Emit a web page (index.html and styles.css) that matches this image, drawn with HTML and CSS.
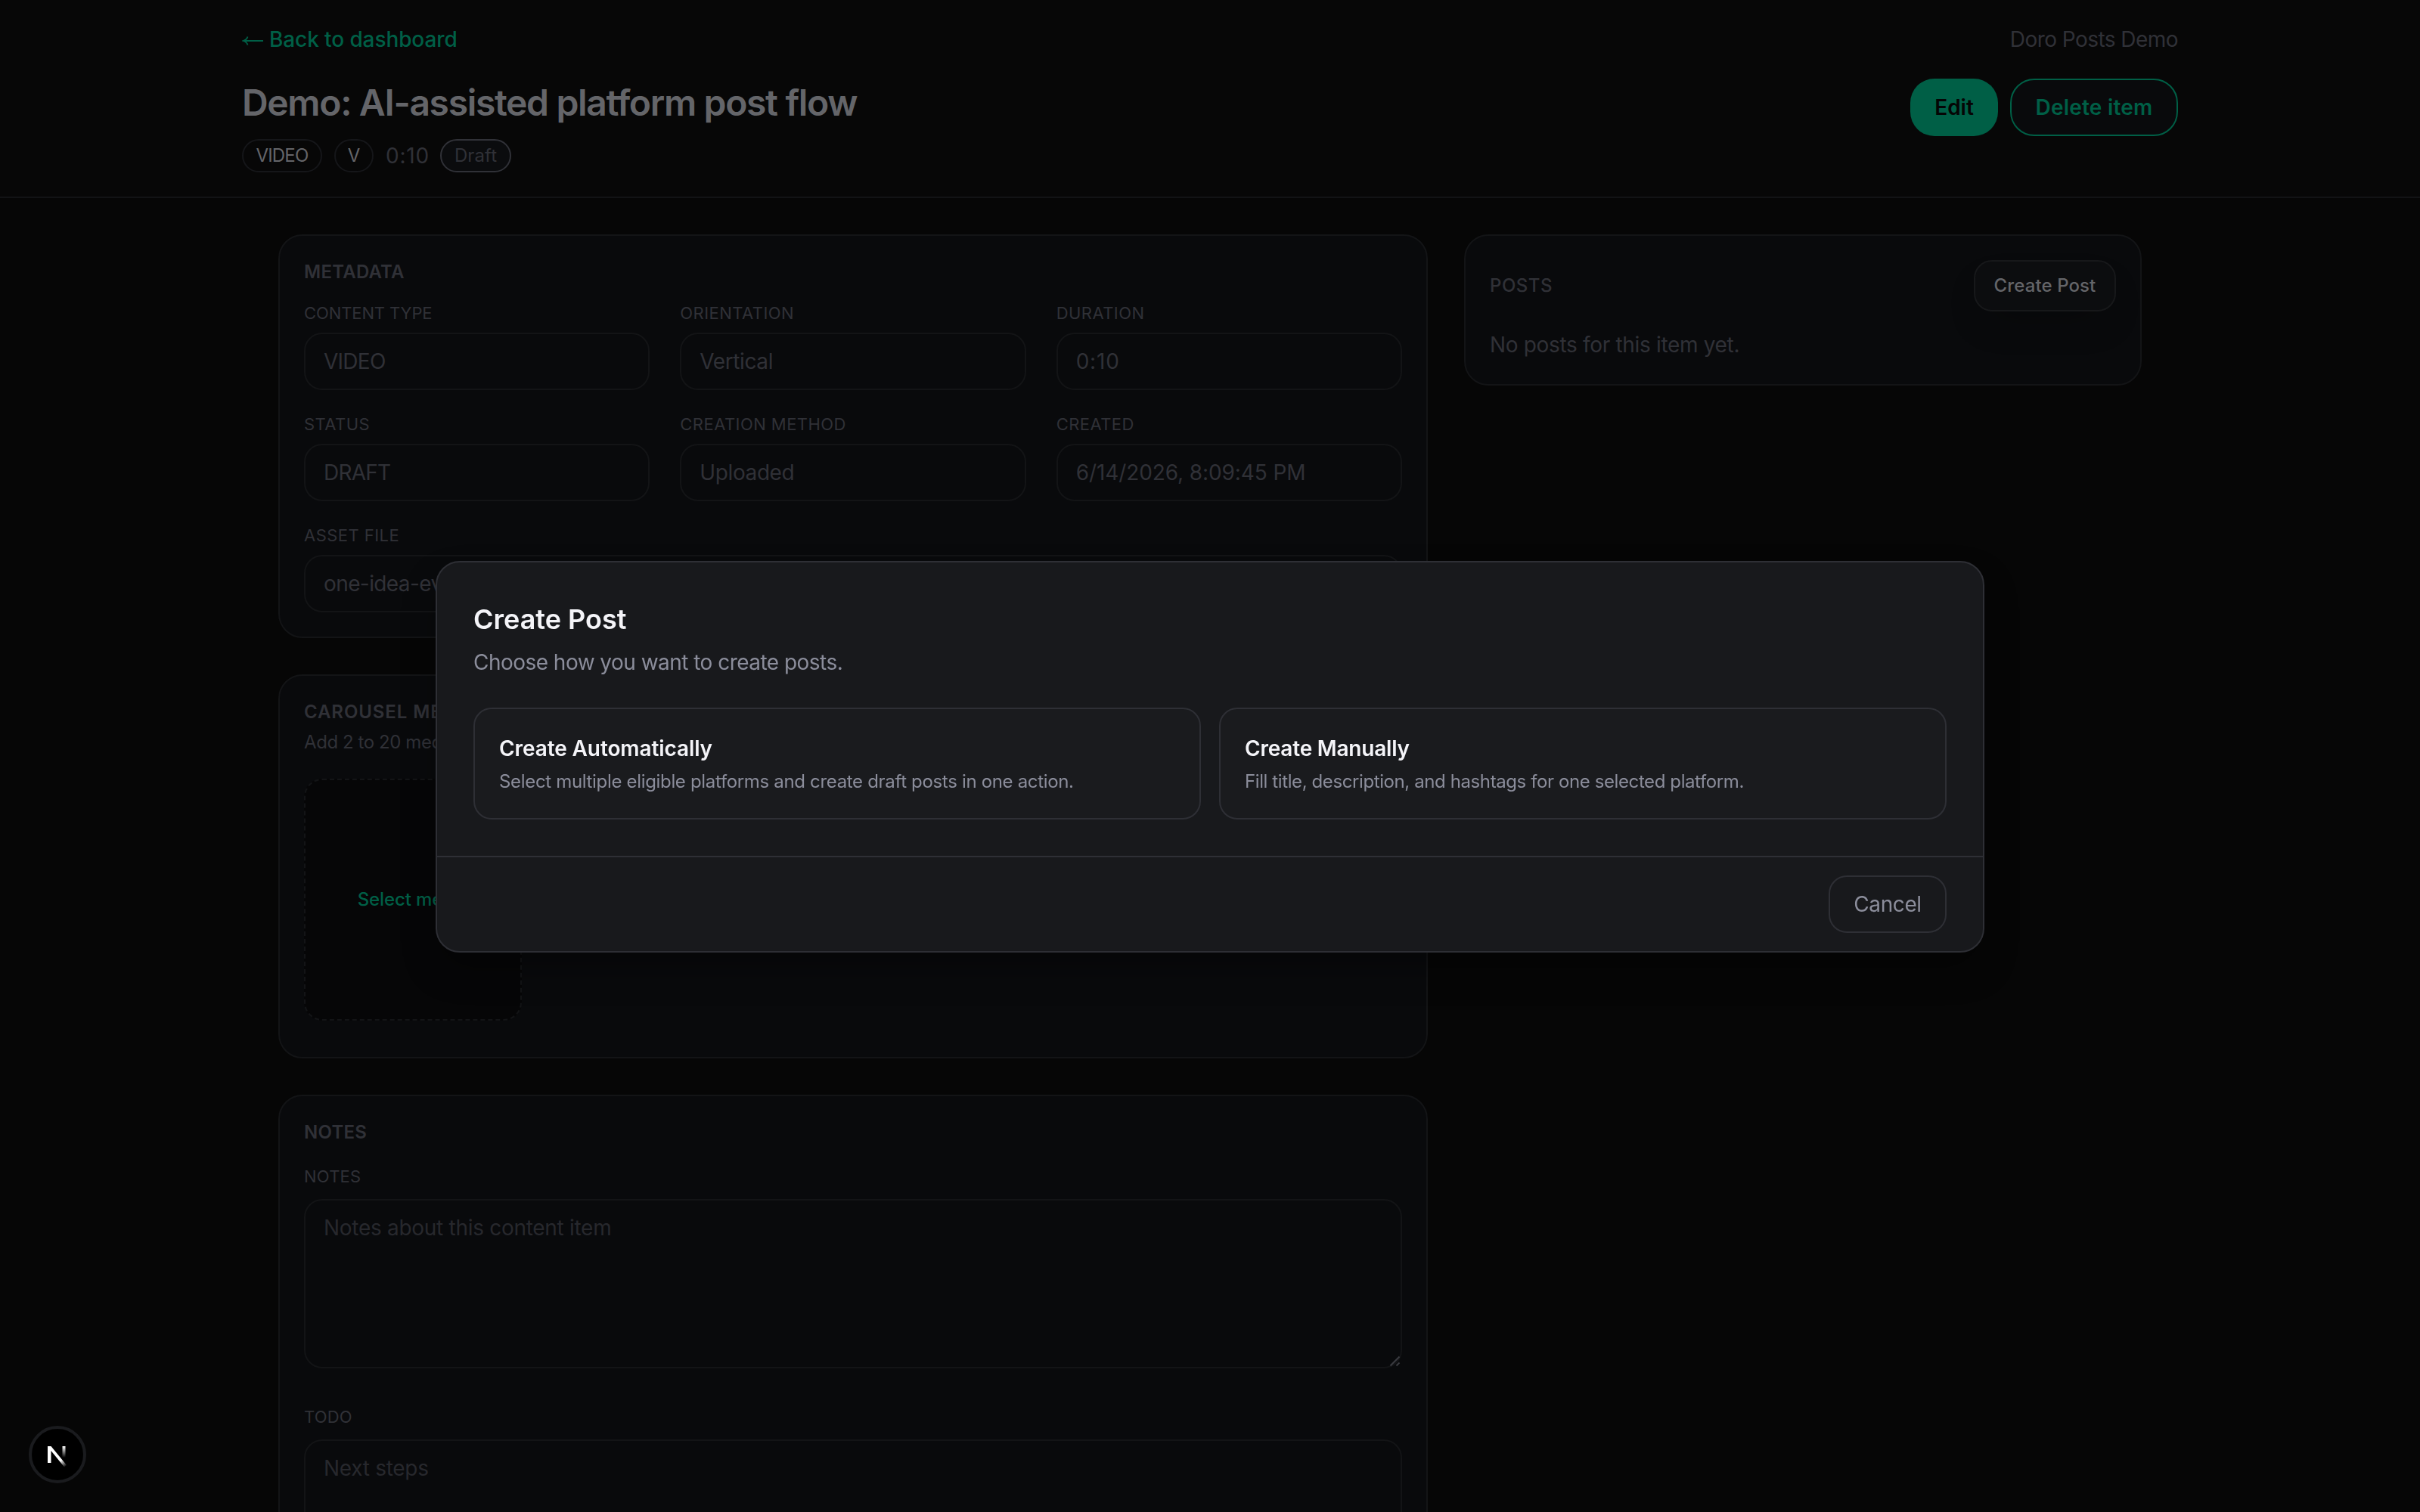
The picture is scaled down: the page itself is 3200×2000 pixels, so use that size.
FILE: index.html
```html
<!DOCTYPE html>
<html lang="en">
<head>
<meta charset="utf-8">
<title>Demo: AI-assisted platform post flow</title>
<link rel="stylesheet" href="styles.css">
</head>
<body>
<div class="page">
  <header class="header">
    <div class="header-inner">
      <div class="header-top">
        <a class="back"><svg class="back-arrow" viewBox="0 0 30 16"><path d="M28 8H2M7.500 2.500Q6.500 6.500 1.500 8Q6.500 9.500 7.500 13.500" fill="none" stroke="#005f46" stroke-width="1.800"/></svg><span>Back to dashboard</span></a>
        <span class="workspace">Doro Posts Demo</span>
      </div>
      <div class="header-row">
        <div>
          <h1 class="title">Demo: AI-assisted platform post flow</h1>
          <div class="badges">
            <span class="badge badge-type">VIDEO</span>
            <span class="badge badge-orient">V</span>
            <span class="length">0:10</span>
            <span class="badge badge-draft">Draft</span>
          </div>
        </div>
        <div class="actions">
          <button class="btn btn-primary">Edit</button>
          <button class="btn btn-outline">Delete item</button>
        </div>
      </div>
    </div>
  </header>

  <main class="main">
    <div class="column">
      <section class="card">
        <h2 class="card-title">METADATA</h2>
        <div class="fields">
          <div class="field"><span class="label label-type">CONTENT TYPE</span><div class="value caps">VIDEO</div></div>
          <div class="field"><span class="label">ORIENTATION</span><div class="value">Vertical</div></div>
          <div class="field"><span class="label">DURATION</span><div class="value duration">0:10</div></div>
          <div class="field"><span class="label">STATUS</span><div class="value caps">DRAFT</div></div>
          <div class="field"><span class="label">CREATION METHOD</span><div class="value">Uploaded</div></div>
          <div class="field"><span class="label">CREATED</span><div class="value date">6/14/2026, 8:09:45 PM</div></div>
          <div class="field field-wide"><span class="label">ASSET FILE</span><div class="value file">one-idea-every-platform.mp4</div></div>
        </div>
      </section>

      <section class="card">
        <h2 class="card-title carousel-title">CAROUSEL MEDIA</h2>
        <p class="card-hint">Add 2 to 20 media files.</p>
        <div class="dropzone">Select media</div>
      </section>

      <section class="card card-notes">
        <h2 class="card-title">NOTES</h2>
        <div class="note">
          <span class="label">NOTES</span>
          <div class="area-wrap">
            <textarea class="area" placeholder="Notes about this content item"></textarea>
            <svg class="grip" viewBox="0 0 16 16"><path d="M1.500 14.500L13.500 2.500M9.500 14.500L13.500 10.500" stroke="#3a3b41" stroke-width="2" fill="none"/></svg>
          </div>
        </div>
        <div class="note">
          <span class="label">TODO</span>
          <div class="area-wrap">
            <textarea class="area" placeholder="Next steps"></textarea>
          </div>
        </div>
      </section>
    </div>

    <aside class="card posts">
      <div class="posts-head">
        <h2 class="card-title posts-title">POSTS</h2>
        <button class="create">Create Post</button>
      </div>
      <p class="empty">No posts for this item yet.</p>
    </aside>
  </main>
</div>

<div class="overlay">
  <div class="modal">
    <div class="modal-body">
      <h2 class="modal-title">Create Post</h2>
      <p class="modal-text">Choose how you want to create posts.</p>
      <div class="options">
        <div class="option">
          <h3 class="option-title">Create Automatically</h3>
          <p class="option-text">Select multiple eligible platforms and create draft posts in one action.</p>
        </div>
        <div class="option">
          <h3 class="option-title option-title-manual">Create Manually</h3>
          <p class="option-text option-text-manual">Fill title, description, and hashtags for one selected platform.</p>
        </div>
      </div>
    </div>
    <div class="modal-footer"><button class="cancel">Cancel</button></div>
  </div>
</div>

<div class="devtools">
  <svg class="logo" width="30" height="30" viewBox="0 0 30 30">
    <defs>
      <linearGradient id="stem" x1="0" y1="2" x2="0" y2="17" gradientUnits="userSpaceOnUse"><stop offset="0" stop-color="#fff"/><stop offset="1" stop-color="#fff" stop-opacity="0"/></linearGradient>
      <linearGradient id="diag" x1="19" y1="21" x2="26" y2="29" gradientUnits="userSpaceOnUse"><stop offset="0" stop-color="#fff"/><stop offset="1" stop-color="#fff" stop-opacity="0"/></linearGradient>
    </defs>
    <path d="M2 24V2H6.500L27 27L24 29.500L6.500 8V24Z" fill="url(#diag)"/>
    <path d="M21.500 2H25.500V17H21.500Z" fill="url(#stem)"/>
  </svg>
</div>
</body>
</html>
```
FILE: styles.css
```css
* { box-sizing: border-box; }

body {
  margin: 0;
  background: #060606;
  color: #303137;
  font-family: Inter, "Liberation Sans", sans-serif;
  font-size: 28px;
  line-height: 40px;
  overflow: hidden;
}

h1, h2, h3, p { margin: 0; }

button {
  font: inherit;
  margin: 0;
  display: flex;
  align-items: center;
  justify-content: center;
  white-space: nowrap;
}

.page { height: 2000px; overflow: hidden; }

/* Header */
.header {
  height: 262px;
  border-bottom: 2px solid #121315;
  background: #070707;
}
.header-inner { width: 2560px; margin: 0 auto; padding-top: 32px; }
.header-top { display: flex; justify-content: space-between; }
.back { display: flex; align-items: center; gap: 6px; color: #005f46; font-weight: 500; letter-spacing: -0.1px; }
.back-arrow { width: 30px; height: 16px; margin-top: 4px; }
.workspace { letter-spacing: -0.55px; }
.header-row { display: flex; justify-content: space-between; margin-top: 32px; }
.title {
  font-size: 48px;
  line-height: 64px;
  font-weight: 600;
  letter-spacing: -1.34px;
  color: #646569;
}
.badges { display: flex; align-items: center; gap: 16px; margin-top: 16px; height: 44px; }
.badge {
  height: 44px;
  display: flex;
  align-items: center;
  justify-content: center;
  border: 2px solid #151619;
  border-radius: 22px;
  font-size: 24px;
  color: #646569;
}
.badge-type { width: 106px; letter-spacing: -0.8px; }
.badge-orient { width: 52px; }
.length { width: 56px; letter-spacing: 0.8px; }
.badge-draft { width: 94px; color: #303137; background: #0b0c0e; border-color: #303137; letter-spacing: 0.1px; }
.actions { display: flex; gap: 16px; }
.btn { height: 76px; border-radius: 32px; font-weight: 600; }
.btn-primary { width: 116px; background: #005f46; color: #050505; border: 0; }
.btn-outline { width: 222px; background: #090a0c; color: #005f46; border: 2px solid #005f46; letter-spacing: 0.2px; }

/* Content */
.main {
  width: 2464px;
  margin: 48px auto 0;
  display: grid;
  grid-template-columns: 1520px 896px;
  gap: 48px;
  align-items: start;
}
.column { display: flex; flex-direction: column; gap: 48px; }
.card {
  border: 2px solid #131416;
  border-radius: 32px;
  background: #090a0c;
  padding: 32px;
}
.card-title { font-size: 24px; line-height: 32px; font-weight: 600; letter-spacing: 0.25px; }
.carousel-title { letter-spacing: 0.9px; }
.fields {
  display: grid;
  grid-template-columns: repeat(3, 1fr);
  column-gap: 40px;
  row-gap: 29px;
  margin-top: 22px;
}
.field { display: flex; flex-direction: column; gap: 10px; }
.field-wide { grid-column: 1 / -1; }
.label { display: block; font-size: 22px; line-height: 32px; letter-spacing: 0.45px; }
.label-type { letter-spacing: -0.1px; }
.value {
  height: 76px;
  padding: 16px 24px;
  border: 2px solid #131416;
  border-radius: 24px;
  letter-spacing: -0.4px;
}
.caps { letter-spacing: -0.75px; }
.duration { letter-spacing: 0.8px; }
.date { letter-spacing: -0.1px; }
.file { letter-spacing: -0.6px; }

.card-hint { font-size: 24px; line-height: 32px; margin-top: 8px; letter-spacing: -0.42px; }
.dropzone {
  width: 288px;
  height: 320px;
  margin: 32px 0 16px;
  display: flex;
  align-items: center;
  justify-content: center;
  border: 2px dashed #131416;
  border-radius: 24px;
  background: #060607;
  color: #005f46;
  font-size: 24px;
  font-weight: 500;
  letter-spacing: -0.13px;
}

.card-notes { height: 720px; }
.note { margin-top: 26px; }
.note .label { letter-spacing: 0.2px; }
.note + .note { margin-top: 48px; }
.area-wrap { position: relative; margin-top: 14px; height: 224px; }
.area {
  display: block;
  width: 100%;
  height: 224px;
  padding: 16px 24px;
  border: 2px solid #131416;
  border-radius: 24px;
  background: transparent;
  font: inherit;
  letter-spacing: -0.29px;
  resize: none;
  outline: 0;
}
.area::placeholder { color: #27282d; }
.grip { position: absolute; right: 1px; bottom: 2px; width: 16px; height: 16px; }

.posts-head { display: flex; justify-content: space-between; align-items: center; }
.posts-title { font-weight: 500; letter-spacing: 0.5px; }
.create {
  width: 188px;
  height: 68px;
  border: 2px solid #17181a;
  border-radius: 24px;
  background: #0c0d0f;
  color: #646569;
  font-size: 24px;
  font-weight: 500;
  letter-spacing: 0.1px;
  box-shadow: 0 24px 48px -16px rgba(0, 0, 0, 0.25);
}
.empty { margin-top: 24px; letter-spacing: -0.33px; }

/* Dialog */
.overlay {
  position: fixed;
  inset: 0;
  display: flex;
  align-items: center;
  justify-content: center;
}
.modal {
  width: 2048px;
  margin-top: 2px;
  border: 2px solid #2e2f35;
  border-radius: 32px;
  background: #18191c;
  box-shadow: 0 24px 50px -8px rgba(0, 0, 0, 0.4);
}
.modal-body { padding: 48px; }
.modal-title { font-size: 36px; line-height: 54px; font-weight: 600; color: #f4f4f8; }
.modal-text { margin-top: 10px; color: #8b8d9b; letter-spacing: -0.53px; }
.options { display: grid; grid-template-columns: 1fr 1fr; gap: 24px; margin-top: 40px; }
.option {
  padding: 32px;
  border: 2px solid #2e2f35;
  border-radius: 24px;
  background: #1a1b1e;
}
.option-title { font-size: 28px; line-height: 40px; font-weight: 600; color: #f4f4f8; letter-spacing: -0.1px; }
.option-title-manual { letter-spacing: -0.2px; }
.option-text { margin-top: 8px; font-size: 24px; line-height: 32px; color: #8b8d9b; letter-spacing: -0.33px; }
.option-text-manual { letter-spacing: -0.4px; }
.modal-footer {
  display: flex;
  justify-content: flex-end;
  padding: 24px 48px;
  border-top: 2px solid #2e2f35;
}
.cancel {
  width: 156px;
  height: 76px;
  border: 2px solid #2e2f35;
  border-radius: 24px;
  background: transparent;
  color: #8b8d9b;
  letter-spacing: -0.4px;
}

/* Framework badge */
.devtools {
  position: fixed;
  left: 38px;
  bottom: 38px;
  width: 76px;
  height: 76px;
  display: flex;
  align-items: center;
  justify-content: center;
  border: 4px solid #1a1b1e;
  border-radius: 50%;
  background: #000;
}
.logo { margin-top: 3px; }
```
